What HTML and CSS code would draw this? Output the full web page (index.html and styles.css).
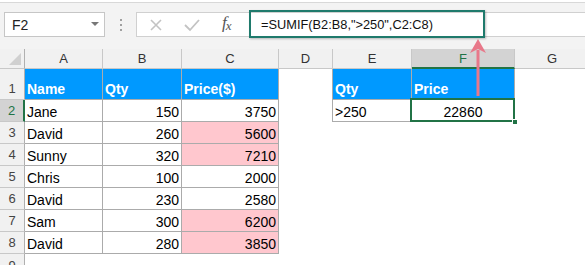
FILE: index.html
```html
<!DOCTYPE html>
<html>
<head>
<meta charset="utf-8">
<link rel="stylesheet" href="styles.css">
</head>
<body>
<div class="app">
  <div class="fbar">
    <div class="namebox"><span class="ref">F2</span><span class="caret"></span></div>
    <div class="dots"><i></i><i></i><i></i></div>
    <div class="btns">
      <svg class="ico" width="16" height="16" viewBox="0 0 16 16"><path d="M3 3 L13 13 M13 3 L3 13" stroke="#c3c3c3" stroke-width="1.6" fill="none"/></svg>
      <svg class="ico" width="18" height="16" viewBox="0 0 18 16"><path d="M2 8 L7 13 L16 3" stroke="#c3c3c3" stroke-width="1.8" fill="none"/></svg>
      <span class="fx">f<sub>x</sub></span>
    </div>
    <div class="input"><span class="formula">=SUMIF(B2:B8,"&gt;250",C2:C8)</span></div>
  </div>
  <div class="sheet">
    <div class="ch corner"><span class="tri"></span></div>
    <div class="ch">A</div><div class="ch">B</div><div class="ch">C</div><div class="ch">D</div><div class="ch">E</div><div class="ch sel">F</div><div class="ch">G</div>

    <div class="rh">1</div>
    <div class="c hd">Name</div><div class="c hd">Qty</div><div class="c hd">Price($)</div><div class="e bl"></div><div class="c hd">Qty</div><div class="c hd">Price</div><div class="e"></div>

    <div class="rh sel">2</div>
    <div class="c">Jane</div><div class="c n">150</div><div class="c n">3750</div><div class="e bl"></div><div class="c">&gt;250</div><div class="c mid active">22860<span class="handle"></span></div><div class="e"></div>

    <div class="rh">3</div>
    <div class="c">David</div><div class="c n">260</div><div class="c n bad">5600</div><div class="e"></div><div class="e"></div><div class="e"></div><div class="e"></div>

    <div class="rh">4</div>
    <div class="c">Sunny</div><div class="c n">320</div><div class="c n bad">7210</div><div class="e"></div><div class="e"></div><div class="e"></div><div class="e"></div>

    <div class="rh">5</div>
    <div class="c">Chris</div><div class="c n">100</div><div class="c n">2000</div><div class="e"></div><div class="e"></div><div class="e"></div><div class="e"></div>

    <div class="rh">6</div>
    <div class="c">David</div><div class="c n">230</div><div class="c n">2580</div><div class="e"></div><div class="e"></div><div class="e"></div><div class="e"></div>

    <div class="rh">7</div>
    <div class="c">Sam</div><div class="c n">300</div><div class="c n bad">6200</div><div class="e"></div><div class="e"></div><div class="e"></div><div class="e"></div>

    <div class="rh">8</div>
    <div class="c">David</div><div class="c n">280</div><div class="c n bad">3850</div><div class="e"></div><div class="e"></div><div class="e"></div><div class="e"></div>

    <div class="rh top">9</div>
    <div class="e"></div><div class="e"></div><div class="e"></div><div class="e"></div><div class="e"></div><div class="e"></div><div class="e"></div>
  </div>

  <div class="hilite"></div>
  <svg class="arrow" width="24" height="64" viewBox="0 0 24 64">
    <path d="M10.5 12 L10.5 58 L13.5 58 L13.5 12 Z" fill="#e8788a"/>
    <path d="M12 1 L4 15 L12 11 L20 15 Z" fill="#e8788a"/>
  </svg>
</div>
</body>
</html>
```
FILE: styles.css
```css
* { box-sizing: border-box; }
html, body { margin: 0; padding: 0; background: #fff; }
body { width: 585px; height: 265px; overflow: hidden; font-family: "Liberation Sans", Arial, sans-serif; }

.app { position: relative; width: 585px; height: 265px; overflow: hidden; }

.fbar {
  height: 47px;
  margin-top: 2px;
  border-top: 1px solid #d8d8d8;
  background: #f3f3f3;
  padding-top: 9px;
  display: flex;
  align-items: flex-start;
}
.namebox {
  margin-left: 4px;
  width: 101px;
  height: 25px;
  background: #fff;
  border: 1px solid #c6c6c6;
  display: flex;
  align-items: center;
  justify-content: space-between;
  padding: 0 5px 0 7px;
  font-size: 14px;
  color: #222;
}
.caret {
  width: 0; height: 0;
  border-left: 4px solid transparent;
  border-right: 4px solid transparent;
  border-top: 4px solid #777;
  margin-top: -2px;
}
.dots {
  width: 31px;
  height: 25px;
  display: flex;
  flex-direction: column;
  align-items: center;
  justify-content: center;
  gap: 3px;
}
.dots i { display: block; width: 2px; height: 2px; background: #a0a0a0; }
.btns {
  width: 113px;
  height: 25px;
  background: #fff;
  border: 1px solid #d0d0d0;
  border-right: none;
  display: flex;
  align-items: center;
  padding-left: 11px;
  gap: 19px;
}
.fx {
  font-family: "Liberation Serif", "DejaVu Serif", serif;
  font-style: italic;
  font-size: 17px;
  color: #555;
  margin-left: 2px;
  line-height: 1;
  margin-top: -3px;
}
.fx sub { font-size: 13px; vertical-align: -2px; margin-left: -1px; }
.input {
  flex: 1;
  height: 25px;
  background: #fff;
  border-top: 1px solid #d0d0d0;
  border-bottom: 1px solid #d0d0d0;
  border-left: 1px solid #d0d0d0;
  display: flex;
  align-items: center;
  padding-left: 11px;
}
.formula { font-size: 12.8px; color: #111; }

.sheet {
  display: grid;
  grid-template-columns: 25px 78px 79px 97px 54px 79px 103px 75px;
  grid-template-rows: 20px 31px repeat(7, 22px) 22px;
  font-size: 14px;
}
.ch {
  background: #f1f1f1;
  border-right: 1px solid #c8c8c8;
  border-bottom: 1px solid #c8c8c8;
  display: flex;
  align-items: center;
  justify-content: center;
  font-size: 13px;
  color: #333;
}
.ch.corner { position: relative; border-right: 1px solid #b0b0b0; }
.tri {
  position: absolute;
  right: 3px; bottom: 3px;
  width: 0; height: 0;
  border-left: 12px solid transparent;
  border-bottom: 12px solid #d0d0d0;
}
.ch.sel { background: #d3d3d3; border-bottom: 2px solid #217346; color: #217346; }
.rh {
  background: #f1f1f1;
  border-right: 1px solid #b0b0b0;
  border-bottom: 1px solid #c8c8c8;
  display: flex;
  align-items: flex-end;
  justify-content: center;
  font-size: 13px;
  color: #444;
  padding-bottom: 2px;
  line-height: 16px;
}
.rh.sel { background: #d3d3d3; border-right: 2px solid #217346; color: #217346; }
.rh.top { align-items: flex-start; padding-top: 4px; }
.c {
  border-right: 1px solid #ababab;
  border-bottom: 1px solid #ababab;
  display: flex;
  align-items: flex-end;
  padding: 0 2px 1px 2px;
  line-height: 16px;
  color: #000;
  white-space: nowrap;
}
.c.hd { background: #0099ff; color: #fff; font-weight: bold; padding-bottom: 2px; }
.c.n { justify-content: flex-end; }
.c.mid { justify-content: center; }
.c.bad { background: #ffc7ce; }
.e.bl { border-right: 1px solid #ababab; }
.active { position: relative; }
.active::after {
  content: "";
  position: absolute;
  left: -2px; top: -2px; right: -1px; bottom: -1px;
  border: 2px solid #217346;
}
.handle {
  position: absolute;
  right: -4px; bottom: -4px;
  width: 6px; height: 6px;
  background: #217346;
  border: 1px solid #fff;
  z-index: 2;
}

.hilite {
  position: absolute;
  left: 249px; top: 10px;
  width: 236px; height: 28px;
  border: 2px solid #1f7a6c;
  box-shadow: 1px 1px 2px rgba(0,0,0,0.25);
}
.arrow {
  position: absolute;
  left: 466px; top: 38px;
}
```
